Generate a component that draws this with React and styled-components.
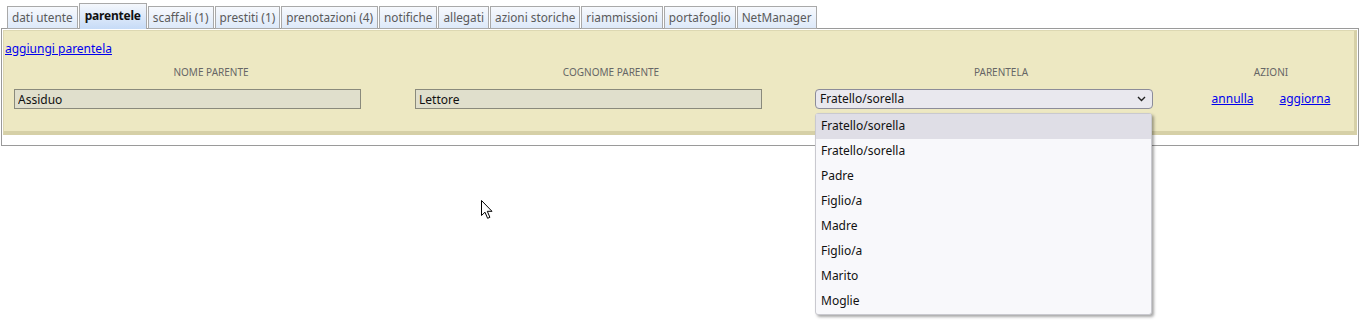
import React, { useState } from "react";
import styled, { createGlobalStyle } from "styled-components";

const GlobalStyle = createGlobalStyle`
  html, body {
    margin: 0;
    padding: 0;
    background: #ffffff;
    font-family: "Noto Sans", "DejaVu Sans", sans-serif;
  }
`;

const Page = styled.div`
  position: relative;
  width: 1360px;
  height: 322px;
  padding: 3px 1px 0 1px;
  box-sizing: border-box;
`;

const TabBar = styled.div`
  display: flex;
  align-items: flex-end;
  gap: 1px;
  padding-left: 6px;
  height: 26px;
  position: relative;
  z-index: 1;
`;

const Tab = styled.div`
  box-sizing: border-box;
  height: ${(p) => (p.$active ? "26px" : "23px")};
  padding: 0 ${(p) => (p.$active ? "5px" : "4px")};
  border: 1px solid #a9a9a9;
  border-bottom: ${(p) => (p.$active ? "none" : "1px solid #a9a9a9")};
  background: ${(p) =>
    p.$active
      ? "linear-gradient(#f4f7fc, #c6dbf7)"
      : "linear-gradient(#f7f9fd, #dde9f9)"};
  color: ${(p) => (p.$active ? "#111" : "#5a5a5a")};
  font-size: ${(p) => (p.$active ? "12px" : "11.8px")};
  font-weight: ${(p) => (p.$active ? 700 : 400)};
  letter-spacing: ${(p) => (p.$active ? "-0.2px" : "0")};
  line-height: ${(p) => (p.$active ? "24px" : "21px")};
  white-space: nowrap;
`;

const Frame = styled.div`
  border: 1px solid #9a9a9a;
  margin-top: -1px;
  padding: 1px 1px 10px 1px;
  height: 118px;
  box-sizing: border-box;
`;

const Panel = styled.div`
  background: #ede8c2;
  border-top: 1px solid #ddd8b2;
  border-left: 1px solid #ddd8b2;
  border-right: 3px solid #d6d0a7;
  border-bottom: 4px solid #d6d0a7;
  padding: 10px 0 22px 1px;
  font-size: 12px;
  line-height: 16px;
`;

const Link = styled.a`
  color: #0000ee;
  text-decoration: underline;
  font-size: 12px;
  line-height: 16px;
  cursor: pointer;
`;

const Grid = styled.div`
  display: grid;
  grid-template-columns: 400px 400px 380px 160px;
  margin-left: 6px;
  margin-top: 8px;
  row-gap: 10px;
`;

const Head = styled.div`
  text-align: center;
  color: #666;
  font-size: 10px;
  line-height: 14px;
`;

const Cell = styled.div`
  position: relative;
  height: 20px;
  padding-left: ${(p) => p.$pad}px;
  display: flex;
  align-items: center;
  justify-content: ${(p) => (p.$center ? "center" : "flex-start")};
  gap: 26px;
`;

const TextInput = styled.input`
  box-sizing: border-box;
  width: 347px;
  height: 20px;
  background: #e0dfcc;
  border: 1px solid #8a8a7c;
  font-family: "Noto Sans", sans-serif;
  font-size: 12px;
  padding: 0 3px;
  color: #111;
  outline: none;
`;

const SelectBox = styled.div`
  box-sizing: border-box;
  width: 338px;
  height: 20px;
  border: 1px solid #8c8c99;
  border-radius: 4px;
  background: #e9e8ee;
  display: flex;
  align-items: center;
  justify-content: space-between;
  padding: 0 6px 0 4px;
  font-size: 12px;
  color: #111;
`;

const Menu = styled.ul`
  position: absolute;
  top: 24px;
  left: 4px;
  width: 337px;
  margin: 0;
  padding: 0;
  list-style: none;
  box-sizing: border-box;
  background: #f8f8fb;
  border: 1px solid #c9c9cf;
  border-radius: 3px;
  box-shadow: 2px 2px 3px rgba(0, 0, 0, 0.35);
  z-index: 5;
`;

const Item = styled.li`
  height: 25px;
  line-height: 24px;
  padding-left: 5px;
  font-size: 12px;
  color: #111;
  background: ${(p) => (p.$hl ? "#dfdee6" : "transparent")};
`;

const Cursor = styled.svg`
  position: absolute;
  left: 481px;
  top: 200px;
  z-index: 10;
`;

const options = [
  "Fratello/sorella",
  "Fratello/sorella",
  "Padre",
  "Figlio/a",
  "Madre",
  "Figlio/a",
  "Marito",
  "Moglie",
];

const tabs = [
  "dati utente",
  "parentele",
  "scaffali (1)",
  "prestiti (1)",
  "prenotazioni (4)",
  "notifiche",
  "allegati",
  "azioni storiche",
  "riammissioni",
  "portafoglio",
  "NetManager",
];

const App = () => {
  const [active] = useState("parentele");

  return (
    <Page>
      <GlobalStyle />
      <TabBar>
        {tabs.map((t) => (
          <Tab key={t} $active={t === active}>
            {t}
          </Tab>
        ))}
      </TabBar>
      <Frame>
        <Panel>
          <Link>aggiungi parentela</Link>
          <Grid>
            <Head>NOME PARENTE</Head>
            <Head>COGNOME PARENTE</Head>
            <Head>PARENTELA</Head>
            <Head>AZIONI</Head>

            <Cell $pad={3}>
              <TextInput defaultValue="Assiduo" />
            </Cell>
            <Cell $pad={4}>
              <TextInput defaultValue="Lettore" />
            </Cell>
            <Cell $pad={4}>
              <SelectBox>
                <span>Fratello/sorella</span>
                <svg width="9" height="6" viewBox="0 0 9 6">
                  <polyline
                    points="1,1 4.5,4.5 8,1"
                    fill="none"
                    stroke="#222"
                    strokeWidth="1.4"
                  />
                </svg>
              </SelectBox>
              <Menu>
                {options.map((o, i) => (
                  <Item key={i} $hl={i === 0}>
                    {o}
                  </Item>
                ))}
              </Menu>
            </Cell>
            <Cell $center $pad={0}>
              <Link>annulla</Link>
              <Link>aggiorna</Link>
            </Cell>
          </Grid>
        </Panel>
      </Frame>
      <Cursor width="13" height="20" viewBox="0 0 13 20">
        <path
          d="M0.5 0.5 L0.5 15.5 L4 12.2 L6.6 18.3 L8.9 17.3 L6.3 11.3 L11 11.3 Z"
          fill="#fff"
          stroke="#000"
          strokeWidth="1"
          strokeLinejoin="round"
        />
      </Cursor>
    </Page>
  );
};

export default App;
